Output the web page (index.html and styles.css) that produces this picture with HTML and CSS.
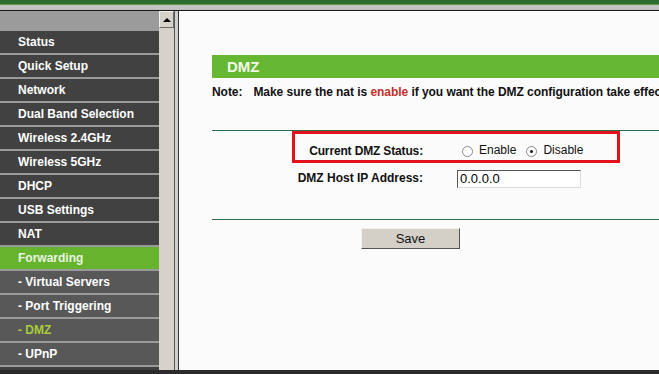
FILE: index.html
```html
<!DOCTYPE html>
<html lang="en">
<head>
    <meta charset="UTF-8">
    <title>DMZ</title>
    <link rel="stylesheet" href="styles.css">
</head>
<body>
    <div class="topbar"></div>
    <div class="frame">
        <div class="menu">
            <div class="menu-head"></div>
            <div class="item">Status</div>
            <div class="item">Quick Setup</div>
            <div class="item">Network</div>
            <div class="item">Dual Band Selection</div>
            <div class="item">Wireless 2.4GHz</div>
            <div class="item">Wireless 5GHz</div>
            <div class="item">DHCP</div>
            <div class="item">USB Settings</div>
            <div class="item">NAT</div>
            <div class="item open">Forwarding</div>
            <div class="item sub">- Virtual Servers</div>
            <div class="item sub">- Port Triggering</div>
            <div class="item sub active">- DMZ</div>
            <div class="item sub">- UPnP</div>
        </div>
        <div class="scroll">
            <div class="scroll-up"><span class="arrow"></span></div>
        </div>
        <div class="divider"></div>
        <div class="content">
            <div class="title">DMZ</div>
            <p class="note"><b>Note:</b><span>Make sure the nat is <em>enable</em> if you want the DMZ configuration take effect.</span></p>
            <div class="line first"></div>
            <div class="form">
                <div class="label tight">Current DMZ Status:</div>
                <div class="field">
                    <span class="radio"></span><span class="opt">Enable</span>
                    <span class="radio checked"></span><span class="opt">Disable</span>
                </div>
                <div class="label">DMZ Host IP Address:</div>
                <div class="field">
                    <input class="ip" type="text" value="0.0.0.0">
                </div>
            </div>
            <div class="line"></div>
            <div class="buttons">
                <button>Save</button>
            </div>
            <div class="mark"></div>
        </div>
    </div>
    <div class="bottombar"></div>
</body>
</html>
```

FILE: styles.css
```css
body {
    margin: 0;
    width: 659px;
    height: 374px;
    overflow: hidden;
    font-family: "Liberation Sans", Arial, sans-serif;
    background-color: #2b2b2b;
}
.topbar {
    height: 10px;
    background: linear-gradient(#2e6b2e 0, #2e6b2e 4px, #5a9a4a 4px, #5a9a4a 5px, #c4c4c4 5px, #c4c4c4 9px, #bdbdbd 9px);
    border-bottom: 1px solid #1a1a1a;
}
.frame {
    display: flex;
    height: 359px;
}
.menu {
    width: 159px;
    background-color: #3f3f3f;
    overflow: hidden;
}
.menu-head {
    height: 20px;
    background-color: #9b9b9b;
}
.item {
    height: 22px;
    line-height: 22px;
    border-bottom: 2px solid #9a9a9a;
    padding-left: 18px;
    color: #fff;
    font-size: 12px;
    font-weight: bold;
    background-color: #414141;
}
.item.open {
    background-color: #66b32e;
    color: #eaf3e0;
}
.item.sub {
    background-color: #585858;
}
.item.active {
    color: #a8cc3a;
}
.scroll {
    width: 15px;
    background-color: #d6d2ca;
    border-right: 1px solid #555;
}
.scroll-up {
    height: 15px;
    border: 1px solid;
    border-color: #f4f2ee #6a6a6a #6a6a6a #f4f2ee;
    background-color: #d6d2ca;
    display: flex;
    align-items: center;
    justify-content: center;
}
.arrow {
    width: 0;
    height: 0;
    border-left: 4px solid transparent;
    border-right: 4px solid transparent;
    border-bottom: 4px solid #000;
}
.divider {
    width: 3px;
    background-color: #cfcfcf;
    border-right: 1px solid #333;
}
.content {
    flex: 1;
    position: relative;
    background-color: #fbfbfb;
    padding: 44px 0 0 33px;
    overflow: hidden;
    white-space: nowrap;
}
.title {
    width: 600px;
    height: 23px;
    line-height: 23px;
    background-color: #66b832;
    color: #f2f8ea;
    font-size: 15px;
    font-weight: bold;
    padding-left: 15px;
}
.note {
    margin: 7px 0 0;
    font-size: 12px;
    font-weight: bold;
    color: #111;
    line-height: 14px;
    letter-spacing: -0.05px;
}
.note span {
    margin-left: 11px;
}
.note em {
    font-style: normal;
    color: #c0302c;
}
.line {
    width: 600px;
    border-top: 1px solid #2f6f50;
}
.line.first {
    margin-top: 31px;
}
.form {
    display: grid;
    grid-template-columns: 211px 300px;
    column-gap: 34px;
    grid-auto-rows: 28px;
    margin: 5px 0 27px;
    font-size: 12px;
}
.label {
    text-align: right;
    font-weight: bold;
    color: #111;
    display: flex;
    align-items: center;
    justify-content: flex-end;
}
.label.tight {
    letter-spacing: -0.15px;
    padding-top: 1px;
}
.field {
    display: flex;
    align-items: center;
    color: #111;
}
.radio {
    width: 9px;
    height: 9px;
    border: 1px solid #888;
    border-radius: 50%;
    background-color: #fff;
    margin: 3px 6px 0 5px;
    position: relative;
}
.radio.checked::after {
    content: "";
    position: absolute;
    left: 3px;
    top: 3px;
    width: 3px;
    height: 3px;
    border-radius: 50%;
    background-color: #111;
}
.opt {
    margin-right: 5px;
    font-size: 12px;
}
.ip {
    width: 118px;
    height: 16px;
    padding: 0 2px;
    border: 1px solid;
    border-color: #555 #ddd #ddd #555;
    font-family: "Liberation Sans", Arial, sans-serif;
    font-size: 13px;
    color: #000;
    margin-top: 1px;
}
.buttons {
    padding: 8px 0 0 149px;
}
button {
    width: 99px;
    height: 21px;
    background-color: #d4d0c8;
    border: 1px solid;
    border-color: #f4f2ee #555 #555 #f4f2ee;
    font-family: "Liberation Sans", Arial, sans-serif;
    font-size: 13px;
    color: #111;
    padding: 0;
}
.mark {
    position: absolute;
    left: 113px;
    top: 120px;
    width: 322px;
    height: 26px;
    border: 3px solid #e0141a;
}
.bottombar {
    height: 4px;
    background-color: #2b2b2b;
}
```
